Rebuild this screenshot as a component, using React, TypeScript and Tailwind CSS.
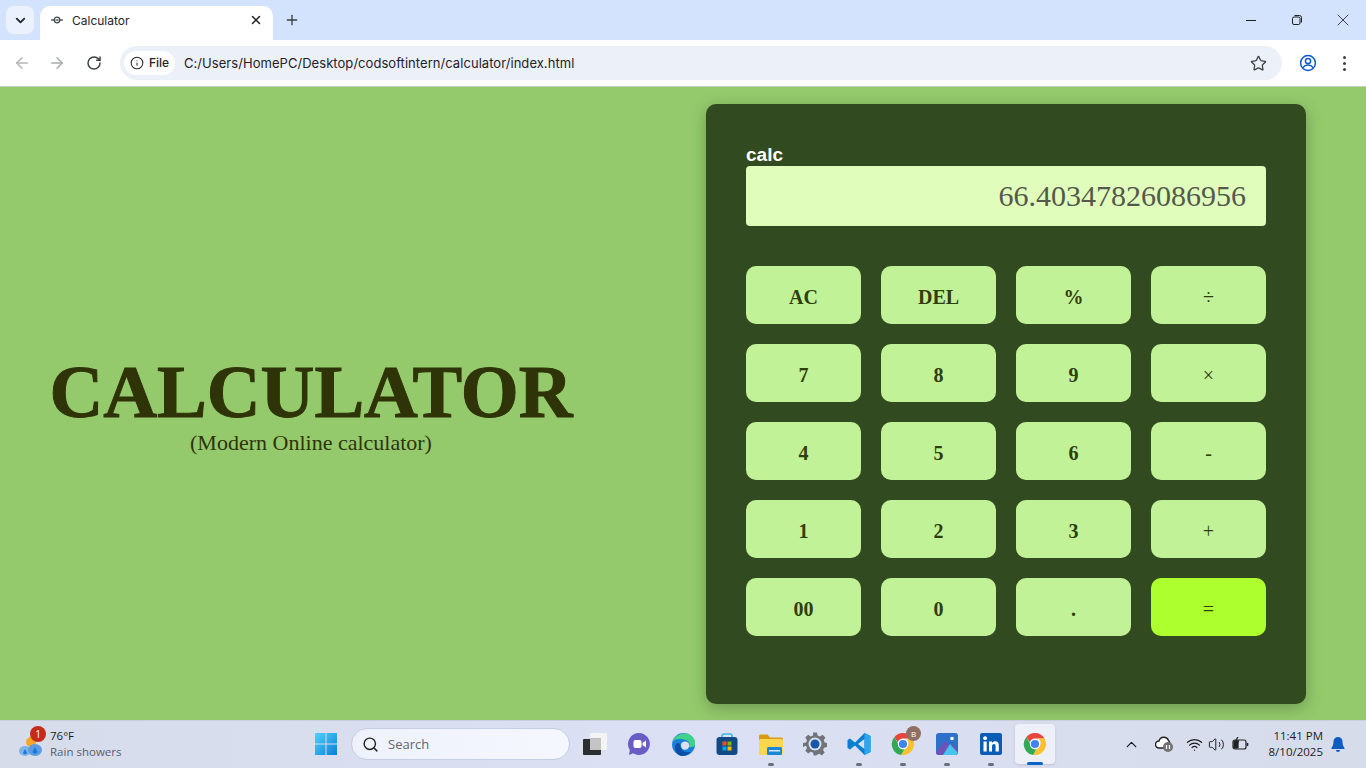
import { ArrowLeft, ArrowRight, ChevronDown, ChevronUp, Info, Plus, RotateCw, Search, Star, Volume2, Wifi, X } from 'lucide-react'

const keys = ['AC', 'DEL', '%', '÷', '7', '8', '9', '×', '4', '5', '6', '-', '1', '2', '3', '+', '00', '0', '.', '=']
const ops = ['÷', '×', '-', '+', '=']

function Key({ label }: { label: string }) {
  const isOp = ops.includes(label)
  return (
    <button
      className={`h-[58px] rounded-[10px] pt-[4px] text-[20px] leading-none text-[#2f3f0c] [font-family:'Liberation_Serif',serif] ${
        isOp ? 'font-normal' : 'font-bold'
      } ${label === '=' ? 'bg-[#aeff2e]' : 'bg-[#c2f298]'}`}
    >
      {label}
    </button>
  )
}

function Chrome() {
  return (
    <div className="[font-family:'Inter','Liberation_Sans',sans-serif]">
      <div className="flex h-[40px] bg-[#d3e3fd] pl-[6px] pt-[6px]">
        <div className="flex h-[28px] w-[28px] items-center justify-center rounded-[8px] bg-[#ebf1fd]">
          <ChevronDown size={15} strokeWidth={3} className="text-[#1f2937]" />
        </div>
        <div className="ml-[6px] flex h-[34px] w-[233px] items-center rounded-t-[10px] bg-white pb-[6px] pl-[11px] pr-[10px]">
          <svg width="12" height="12" viewBox="0 0 12 12" fill="none" stroke="#44474a" strokeWidth="1.3">
            <path d="M0 6h12" />
            <circle cx="6" cy="6" r="2.8" fill="#fff" />
            <path d="M4.500 6h3" />
          </svg>
          <span className="ml-[9px] flex-1 pt-[2px] text-[12px] text-[#1f2328]">Calculator</span>
          <X size={14} strokeWidth={2.6} className="text-[#1f2328]" />
        </div>
        <div className="ml-[5px] flex h-[28px] w-[28px] items-center justify-center">
          <Plus size={16} strokeWidth={2} className="text-[#3c4043]" />
        </div>
        <div className="ml-auto flex h-[28px] items-center">
          <div className="flex w-[46px] justify-center">
            <div className="h-px w-[10px] bg-[#1f1f1f]" />
          </div>
          <div className="flex w-[46px] justify-center">
            <svg width="12" height="12" viewBox="0 0 12 12" fill="none" stroke="#1f1f1f">
              <rect x="1.500" y="3" width="7.500" height="7.500" rx="1.500" />
              <path d="M3.500 1.500h5a2 2 0 0 1 2 2v5" />
            </svg>
          </div>
          <div className="flex w-[46px] justify-center">
            <X size={20} strokeWidth={1} className="text-[#1f1f1f]" />
          </div>
        </div>
      </div>
      <div className="flex h-[47px] items-center rounded-t-[8px] border-b border-[#c5d0c0] bg-white pl-[13px] pr-[13px]">
        <ArrowLeft size={18} className="text-[#b3b6ba]" />
        <ArrowRight size={18} className="ml-[17px] text-[#a9acb0]" />
        <RotateCw size={16} strokeWidth={2.2} className="ml-[20px] text-[#3c4043]" />
        <div className="ml-[18px] flex h-[34px] flex-1 items-center rounded-full bg-[#ebf0f9] pl-[4px] pr-[15px]">
          <div className="flex h-[24px] w-[51px] items-center justify-center gap-[5px] rounded-full bg-white">
            <Info size={14} strokeWidth={1.8} className="text-[#25282b]" />
            <span className="text-[12px] font-medium text-[#1f2328]">File</span>
          </div>
          <span className="ml-[9px] flex-1 pt-[2px] text-[13px] tracking-[0.05px] text-[#1f2328]">
            C:/Users/HomePC/Desktop/codsoftintern/calculator/index.html
          </span>
          <Star size={17} strokeWidth={1.8} className="text-[#3c4043]" />
        </div>
        <svg className="ml-[17px]" width="18" height="18" viewBox="0 0 18 18" fill="none" stroke="#0b57d0" strokeWidth="1.500">
          <circle cx="9" cy="9" r="7.400" />
          <circle cx="9" cy="7" r="2.600" />
          <path d="M3.800 13.600c1.500-1.900 3.200-2.600 5.200-2.600s3.700.7 5.200 2.600" />
        </svg>
        <div className="ml-[26px] mr-[7px] flex flex-col gap-[3px]">
          <div className="h-[3px] w-[3px] rounded-full bg-[#3c4043]" />
          <div className="h-[3px] w-[3px] rounded-full bg-[#3c4043]" />
          <div className="h-[3px] w-[3px] rounded-full bg-[#3c4043]" />
        </div>
      </div>
    </div>
  )
}

function ChromeLogo({ size = 24 }: { size?: number }) {
  return (
    <svg width={size} height={size} viewBox="0 0 24 24">
      <path d="M12 1a11 11 0 0 1 9.500 5.500H12a5.500 5.500 0 0 0-5.200 3.700L3.400 4.900A11 11 0 0 1 12 1z" fill="#e8453c" />
      <path d="M3.400 4.900l4.900 9a5.500 5.500 0 0 0 5.200 3.400L10.200 22.900A11 11 0 0 1 3.400 4.900z" fill="#31a853" />
      <path d="M21.500 6.500A11 11 0 0 1 10.200 22.900l4.800-7.400a5.500 5.500 0 0 0 .6-9z" fill="#fbc02d" />
      <circle cx="12" cy="12" r="5.200" fill="#fff" />
      <circle cx="12" cy="12" r="4.100" fill="#3f83f0" />
    </svg>
  )
}

function Dock({ children, dot, active }: { children: React.ReactNode; dot?: boolean; active?: boolean }) {
  return (
    <div className={`relative flex h-[40px] w-[40px] items-center justify-center rounded-[4px] ${active ? 'bg-[#edf0f8] shadow-sm' : ''}`}>
      {children}
      {dot && <div className="absolute bottom-[-2px] h-[3px] w-[6px] rounded-full bg-[#6b6f78]" />}
      {active && <div className="absolute bottom-[-1px] h-[3px] w-[16px] rounded-full bg-[#0a63c9]" />}
    </div>
  )
}

function Taskbar() {
  return (
    <div className="relative flex h-[48px] items-center border-t border-[#c9cfdc] bg-gradient-to-r from-[#d6dcea] via-[#dbe0f4] to-[#d6dcea] pb-[1px] [font-family:'Open_Sans','Noto_Sans',sans-serif]">
      <div className="flex w-[306px] items-center pl-[18px]">
        <div className="relative h-[28px] w-[28px]">
          <svg width="26" height="26" viewBox="0 0 26 26" className="absolute left-0 top-[3px]">
            <circle cx="13" cy="9" r="5" fill="#f5a623" />
            <ellipse cx="7" cy="18" rx="6" ry="5" fill="#7fb2e5" />
            <ellipse cx="17" cy="17" rx="7" ry="6" fill="#5b9be0" />
            <path d="M7 16l2 4a2.200 2.200 0 0 1-4 0zM17 14l2.500 5a2.700 2.700 0 0 1-5 0z" fill="#1678e0" />
          </svg>
          <div className="absolute left-[12px] top-[-4px] flex h-[16px] w-[16px] items-center justify-center rounded-full bg-[#c42b1c] text-[10px] text-white">1</div>
        </div>
        <div className="ml-[4px] flex flex-col text-[11.500px] leading-[16px]">
          <span className="text-[#1c1c1c]">76°F</span>
          <span className="text-[#5a5d66]">Rain showers</span>
        </div>
      </div>
      <div className="flex items-center">
        <div className="flex h-[40px] w-[40px] items-center justify-center">
          <svg width="24" height="24" viewBox="0 0 24 24">
            <defs>
              <linearGradient id="winGrad" x1="0" y1="0" x2="1" y2="1">
                <stop offset="0" stopColor="#4fd2fb" />
                <stop offset="1" stopColor="#0a7fd8" />
              </linearGradient>
            </defs>
            <path d="M1 1h10.500v10.500H1zM12.500 1H23v10.500H12.500zM1 12.500h10.500V23H1zM12.500 12.500H23V23H12.500z" fill="url(#winGrad)" />
          </svg>
        </div>
        <div className="ml-[5px] mr-[5px] flex h-[32px] w-[219px] items-center rounded-full border border-[#c6cee4] bg-gradient-to-r from-[#eef2fb] to-[#f5f7fe] pl-[10px]">
          <Search size={17} strokeWidth={2} className="text-[#222]" />
          <span className="ml-[9px] pt-[2px] text-[13px] text-[#62656c]">Search</span>
        </div>
        <Dock>
          <svg width="24" height="24" viewBox="0 0 24 24">
            <rect x="7" y="1" width="17" height="17" rx="1" fill="#f4f4f4" />
            <rect x="7" y="6" width="11" height="12" fill="#bdbdbd" />
            <rect x="0" y="7" width="18" height="16" rx="1" fill="#232323" opacity="0.95" />
            <rect x="7" y="7" width="11" height="11" fill="#c4c4c4" />
          </svg>
        </Dock>
        <div className="w-[4px]" />
        <Dock>
          <svg width="24" height="24" viewBox="0 0 24 24">
            <path d="M12 1a11 11 0 1 1-6 20.300L2 23l.8-5A11 11 0 0 1 12 1z" fill="#6a5cc7" />
            <rect x="6.500" y="8" width="8" height="8" rx="2" fill="#fff" />
            <path d="M15.500 11l3.500-2.500v7L15.500 13z" fill="#fff" />
          </svg>
        </Dock>
        <div className="w-[4px]" />
        <Dock>
          <svg width="25" height="25" viewBox="0 0 24 24">
            <circle cx="12" cy="12" r="11" fill="#1b7fd6" />
            <path d="M1.500 9C4 2.500 12-.5 18 2.500c4 2 5.500 6 5 9.500-.3 2-3 3-6 2.500 1.500-1.500 1-5-2-6.500C10.500 6 4 6 1.500 9z" fill="#3fd28b" />
            <circle cx="13.500" cy="13" r="4" fill="#dbe0f0" />
            <path d="M9 13c0 5 5 7.500 10 6a11 11 0 0 1-8 4C6 23 3 18 4 13c1.500-3 4-3.500 5 0z" fill="#0c4fa8" />
          </svg>
        </Dock>
        <div className="w-[4px]" />
        <Dock>
          <svg width="24" height="24" viewBox="0 0 24 24">
            <path d="M7 6V4a2 2 0 0 1 2-2h6a2 2 0 0 1 2 2v2" fill="none" stroke="#35b8ea" strokeWidth="1.600" />
            <rect x="1.500" y="5" width="21" height="18" rx="3" fill="#124a86" />
            <rect x="7.500" y="9.500" width="4" height="4" fill="#f25022" />
            <rect x="12.500" y="9.500" width="4" height="4" fill="#7fba00" />
            <rect x="7.500" y="14.500" width="4" height="4" fill="#00a4ef" />
            <rect x="12.500" y="14.500" width="4" height="4" fill="#ffb900" />
          </svg>
        </Dock>
        <div className="w-[4px]" />
        <Dock dot>
          <svg width="24" height="24" viewBox="0 0 24 24">
            <path d="M0 4a1.500 1.500 0 0 1 1.500-1.500h7l2.500 3h11.500A1.500 1.500 0 0 1 24 7v2H0z" fill="#d99b12" />
            <rect x="0" y="7" width="24" height="16" rx="1.500" fill="#fdd64f" />
            <rect x="8" y="15" width="15" height="8" rx="1.500" fill="#1a86d8" />
            <rect x="10" y="18" width="11" height="1.500" fill="#cde6f8" />
          </svg>
        </Dock>
        <div className="w-[4px]" />
        <Dock>
          <svg width="24" height="24" viewBox="0 0 24 24">
            <path d="M10 1h4l.6 3 2.400 1 2.600-1.700 2.800 2.800L20.700 8.700l1 2.300 2.300.6v4l-3 .6-1 2.300 1.700 2.600-2.800 2.800-2.600-1.700-2.400 1L13.300 24h-2.600l-.6-2.700-2.400-1-2.600 1.700-2.800-2.800 1.700-2.600-1-2.300L0 15.600v-4l3-.6 1-2.300L2.300 6.100l2.800-2.800L7.700 5l2.400-1z" fill="#6f7479" transform="translate(0 -0.500)" />
            <circle cx="12" cy="12" r="6.500" fill="#dbe0ec" />
            <circle cx="12" cy="12" r="4.500" fill="#1558a8" />
          </svg>
        </Dock>
        <div className="w-[4px]" />
        <Dock dot>
          <svg width="24" height="24" viewBox="0 0 24 24">
            <path d="M17.500 1L23.500 4v16l-6 3L8 13.500 3 17.500 .5 16V8L3 6.500l5 4zM17.500 7L11 12l6.500 5z" fill="#0d7fd0" fillRule="evenodd" />
            <path d="M17.500 1L23.500 4v16l-6 3z" fill="#2ba7ef" />
          </svg>
        </Dock>
        <div className="w-[4px]" />
        <Dock dot>
          <div className="relative">
            <ChromeLogo />
            <div className="absolute right-[-6px] top-[-6px] flex h-[15px] w-[15px] items-center justify-center rounded-full bg-[#8f6f63] text-[8px] text-white">B</div>
          </div>
        </Dock>
        <div className="w-[4px]" />
        <Dock dot>
          <svg width="24" height="24" viewBox="0 0 24 24">
            <rect x="1" y="1" width="22" height="22" rx="3" fill="#2f71c9" />
            <path d="M1 20l9-11 5 6 3-3 5 6v2a3 3 0 0 1-3 3H4a3 3 0 0 1-3-3z" fill="#6e52b8" />
            <path d="M8 23l7-11 8 9a3 3 0 0 1-3 2z" fill="#45c4f0" />
            <circle cx="17" cy="6.500" r="1.800" fill="#fff" />
          </svg>
        </Dock>
        <div className="w-[4px]" />
        <Dock dot>
          <svg width="24" height="24" viewBox="0 0 24 24">
            <rect x="1" y="1" width="22" height="22" rx="2" fill="#0a5db5" />
            <rect x="4.500" y="9.500" width="3.200" height="10" fill="#fff" />
            <circle cx="6.100" cy="6.200" r="1.900" fill="#fff" />
            <path d="M10 9.500h3v1.400c.6-1 1.800-1.700 3.200-1.700 2.600 0 3.600 1.700 3.600 4.300v6h-3.200v-5.300c0-1.400-.4-2.300-1.600-2.300-1.300 0-2 1-2 2.400v5.200H10z" fill="#fff" />
          </svg>
        </Dock>
        <div className="w-[4px]" />
        <Dock active>
          <ChromeLogo />
        </Dock>
      </div>
      <div className="ml-auto flex items-center pr-[20px] text-[#1c1c1c]">
        <ChevronUp size={17} strokeWidth={1.8} />
        <svg className="ml-[15px]" width="18" height="16" viewBox="0 0 18 16">
          <path d="M4 12a3.500 3.500 0 0 1 0-7 5 5 0 0 1 9.500-.5A3.500 3.500 0 0 1 14 9v3z" fill="#fff" stroke="#222" strokeWidth="1.400" />
          <circle cx="13" cy="11" r="5" fill="#707070" />
          <path d="M11.500 9v4M14.500 9v4" stroke="#fff" strokeWidth="1.300" />
        </svg>
        <Wifi size={17} strokeWidth={1.7} className="ml-[13px]" />
        <Volume2 size={17} strokeWidth={1.4} className="ml-[5px]" />
        <svg className="ml-[7px]" width="18" height="14" viewBox="0 0 18 14" fill="none" stroke="#222" strokeWidth="1.200">
          <rect x="1" y="3" width="13" height="9" rx="2" />
          <path d="M15.500 6v3" strokeWidth="1.600" />
          <path d="M2 4h4v7H2z" fill="#222" />
          <path d="M6 0L3.500 4h3L5 7" />
        </svg>
        <div className="ml-[19px] flex flex-col items-end text-[11.500px] leading-[16px]">
          <span>11:41 PM</span>
          <span>8/10/2025</span>
        </div>
        <svg className="ml-[7px]" width="16" height="16" viewBox="0 0 16 16" fill="#0f5cc0">
          <path d="M8 1a4.500 4.500 0 0 0-4.500 4.500c0 4-1.500 5.500-2 6.500v1h13v-1c-.5-1-2-2.500-2-6.500A4.500 4.500 0 0 0 8 1z" />
          <path d="M6 14h4a2 2 0 0 1-4 0z" />
        </svg>
      </div>
    </div>
  )
}

export default function App() {
  return (
    <div className="flex h-[768px] w-[1366px] flex-col overflow-hidden">
      <Chrome />
      <div className="flex flex-1 items-center bg-[#94ca6c]">
        <div className="flex w-[706px] flex-col items-center pr-[84px] text-[#2f3308] [font-family:'Liberation_Serif',serif]">
          <h1 className="text-[74.500px] leading-[78px] font-bold [-webkit-text-stroke:1px_#2f3308]">CALCULATOR</h1>
          <p className="text-[22px] leading-[24px]">(Modern Online calculator)</p>
        </div>
        <div className="h-[600px] w-[600px] rounded-[10px] bg-[#324a20] px-[40px] pt-[40px] shadow-[0_4px_16px_rgba(0,0,0,0.25)]">
          <div className="pb-[1px] text-[19px] leading-[21px] font-bold text-white [font-family:'Liberation_Sans',sans-serif]">calc</div>
          <div className="flex h-[60px] items-center justify-end rounded-[4px] bg-[#e0fdbc] px-[20px] text-[30px] text-[#53594c] [font-family:'Liberation_Serif',serif]">
            66.40347826086956
          </div>
          <div className="mt-[40px] grid grid-cols-4 gap-x-[20px] gap-y-[20px]">
            {keys.map(k => (
              <Key key={k} label={k} />
            ))}
          </div>
        </div>
      </div>
      <Taskbar />
    </div>
  )
}
